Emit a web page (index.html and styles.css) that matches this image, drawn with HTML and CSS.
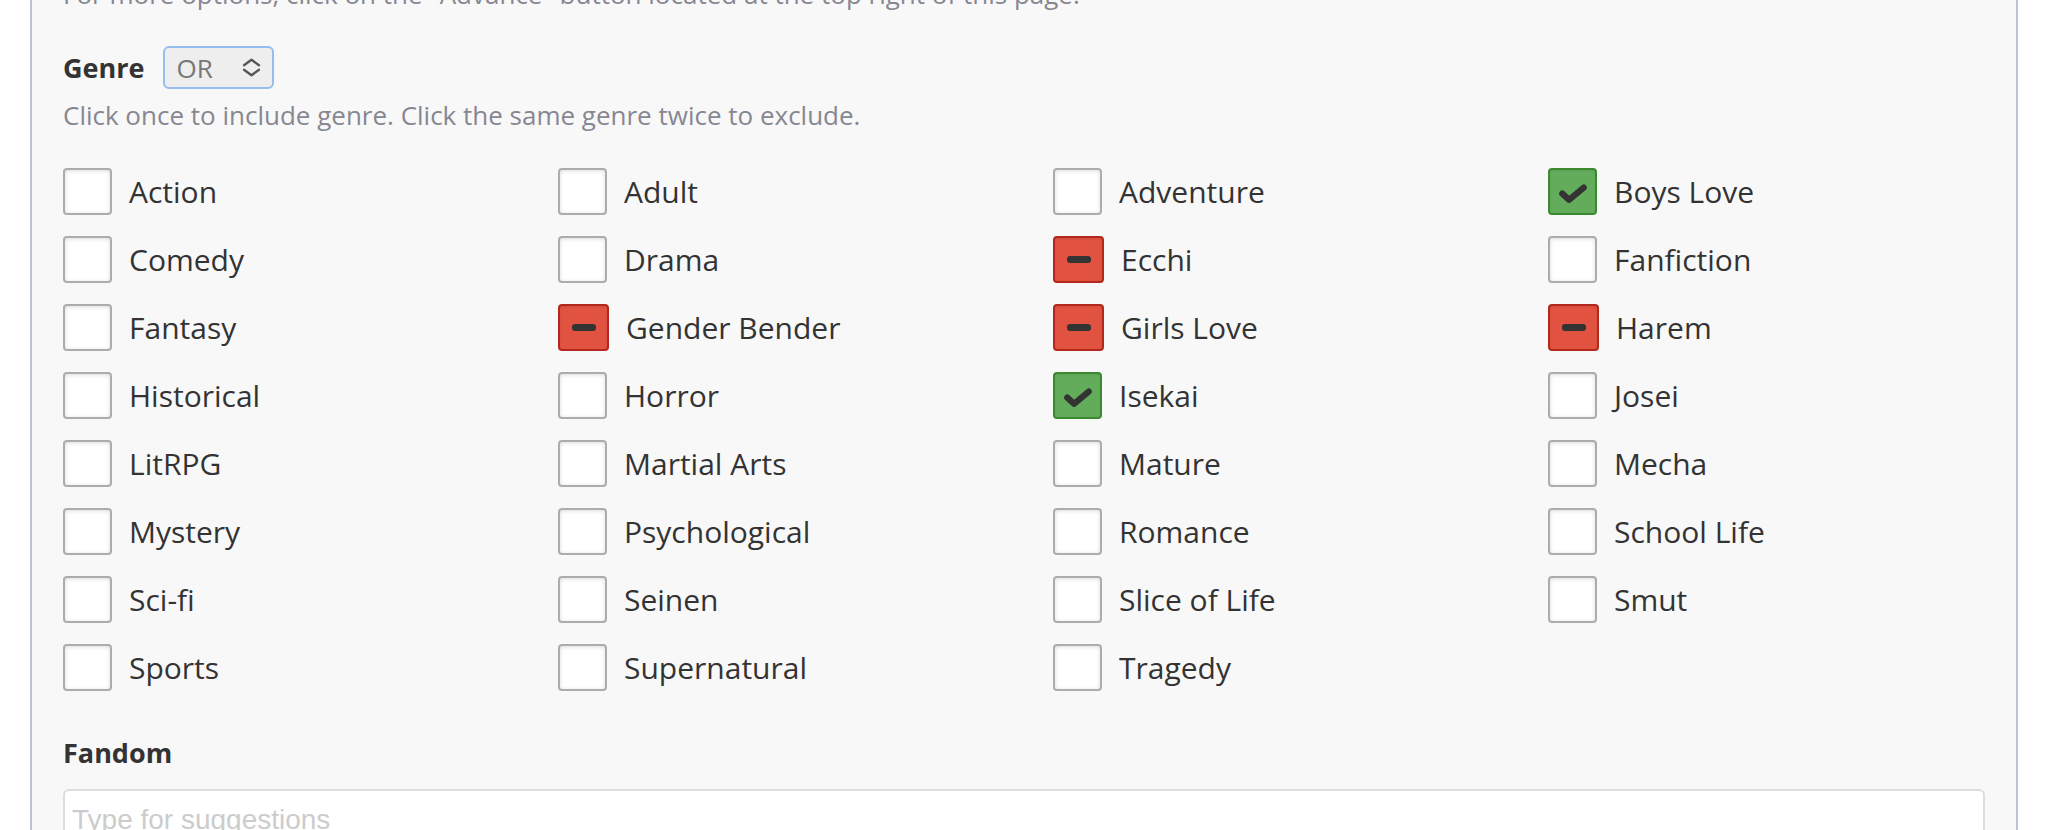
FILE: index.html
```html
<!DOCTYPE html>
<html lang="en">
<head>
<meta charset="utf-8">
<title>Genre filter</title>
<link rel="stylesheet" href="styles.css">
</head>
<body>
<div class="panel">
  <p class="hint hint-top">For more options, click on the "Advance" button located at the top right of this page.</p>
  <div class="genre-head">
    <span class="field-label">Genre</span>
    <div class="select">
      <span class="select-value">OR</span>
      <svg class="select-arrows" width="19" height="19" viewBox="0 0 19 19"><path d="M2 7.2 L9.5 1.8 L17 7.2 M2 11.8 L9.5 17.2 L17 11.8" fill="none" stroke="#555" stroke-width="2.3" stroke-linecap="round" stroke-linejoin="round"/></svg>
    </div>
  </div>
  <p class="hint hint-desc">Click once to include genre. Click the same genre twice to exclude.</p>
  <div class="genres">
    <label class="genre"><span class="box"></span><span class="name">Action</span></label>
    <label class="genre"><span class="box"></span><span class="name">Adult</span></label>
    <label class="genre"><span class="box"></span><span class="name">Adventure</span></label>
    <label class="genre"><span class="box included"><svg width="28" height="20" viewBox="0 0 28 20"><path d="M3.3 9.6 L10 15.8 L24.7 3.6" fill="none" stroke="#333" stroke-width="6.2" stroke-linecap="round" stroke-linejoin="round"/></svg></span><span class="name">Boys Love</span></label>

    <label class="genre"><span class="box"></span><span class="name">Comedy</span></label>
    <label class="genre"><span class="box"></span><span class="name">Drama</span></label>
    <label class="genre"><span class="box excluded"><span class="minus"></span></span><span class="name">Ecchi</span></label>
    <label class="genre"><span class="box"></span><span class="name">Fanfiction</span></label>

    <label class="genre"><span class="box"></span><span class="name">Fantasy</span></label>
    <label class="genre"><span class="box excluded"><span class="minus"></span></span><span class="name">Gender Bender</span></label>
    <label class="genre"><span class="box excluded"><span class="minus"></span></span><span class="name">Girls Love</span></label>
    <label class="genre"><span class="box excluded"><span class="minus"></span></span><span class="name">Harem</span></label>

    <label class="genre"><span class="box"></span><span class="name">Historical</span></label>
    <label class="genre"><span class="box"></span><span class="name">Horror</span></label>
    <label class="genre"><span class="box included"><svg width="28" height="20" viewBox="0 0 28 20"><path d="M3.3 9.6 L10 15.8 L24.7 3.6" fill="none" stroke="#333" stroke-width="6.2" stroke-linecap="round" stroke-linejoin="round"/></svg></span><span class="name">Isekai</span></label>
    <label class="genre"><span class="box"></span><span class="name">Josei</span></label>

    <label class="genre"><span class="box"></span><span class="name">LitRPG</span></label>
    <label class="genre"><span class="box"></span><span class="name">Martial Arts</span></label>
    <label class="genre"><span class="box"></span><span class="name">Mature</span></label>
    <label class="genre"><span class="box"></span><span class="name">Mecha</span></label>

    <label class="genre"><span class="box"></span><span class="name">Mystery</span></label>
    <label class="genre"><span class="box"></span><span class="name">Psychological</span></label>
    <label class="genre"><span class="box"></span><span class="name">Romance</span></label>
    <label class="genre"><span class="box"></span><span class="name">School Life</span></label>

    <label class="genre"><span class="box"></span><span class="name">Sci-fi</span></label>
    <label class="genre"><span class="box"></span><span class="name">Seinen</span></label>
    <label class="genre"><span class="box"></span><span class="name">Slice of Life</span></label>
    <label class="genre"><span class="box"></span><span class="name">Smut</span></label>

    <label class="genre"><span class="box"></span><span class="name">Sports</span></label>
    <label class="genre"><span class="box"></span><span class="name">Supernatural</span></label>
    <label class="genre"><span class="box"></span><span class="name">Tragedy</span></label>
  </div>
  <div class="field-label fandom">Fandom</div>
  <input class="text-input" type="text" placeholder="Type for suggestions">
</div>
</body>
</html>
```
FILE: styles.css
```css
html, body {
  margin: 0;
  padding: 0;
  background: #ffffff;
  overflow: hidden;
}

body {
  font-family: "Open Sans", "Noto Sans", sans-serif;
  color: #333333;
}

.panel {
  margin: 0 30px;
  min-height: 830px;
  background: #f8f8f8;
  border-left: 2px solid #bcc4d0;
  border-right: 2px solid #bcc4d0;
  padding: 0 31px;
  box-sizing: border-box;
}

.hint {
  margin: 0;
  font-size: 26px;
  line-height: 34px;
  color: #878792;
}

.hint-top {
  margin-top: -23px;
  white-space: nowrap;
}

.genre-head {
  display: flex;
  align-items: center;
  gap: 19px;
  height: 43px;
  margin-top: 35px;
}

.field-label {
  font-size: 27px;
  font-weight: 700;
  line-height: 36px;
  color: #333333;
}

.select {
  box-sizing: border-box;
  width: 111px;
  height: 43px;
  border: 2px solid #97bdf0;
  border-radius: 6px;
  background: #eeeeee;
  display: flex;
  align-items: center;
  justify-content: space-between;
  padding: 0 11px 0 11px;
}

.select-value {
  font-size: 26px;
  color: #777777;
  line-height: 1;
}

.hint-desc {
  margin-top: 9px;
}

.genres {
  display: grid;
  grid-template-columns: repeat(3, 495px) 1fr;
  row-gap: 21px;
  margin-top: 36px;
}

.genre {
  display: flex;
  align-items: center;
  gap: 17px;
  height: 47px;
}

.box {
  box-sizing: border-box;
  width: 49px;
  height: 47px;
  border: 2px solid #acacac;
  border-radius: 4px;
  background: #ffffff;
  box-shadow: inset 0 1px 4px rgba(0, 0, 0, 0.14);
  display: flex;
  align-items: center;
  justify-content: center;
  flex: none;
}

.box.included {
  background: #63ac5c;
  border-color: #3c8a2f;
  box-shadow: inset 0 1px 2px rgba(0, 0, 0, 0.08);
  padding-top: 4px;
}

.box.excluded {
  width: 51px;
  background: #e15241;
  border-color: #b2281c;
  box-shadow: inset 0 1px 2px rgba(0, 0, 0, 0.08);
}

.minus {
  display: block;
  width: 24px;
  height: 7px;
  border-radius: 3px;
  background: #333333;
}

.name {
  font-size: 30px;
  line-height: 41px;
  color: #333333;
  white-space: nowrap;
}

.fandom {
  margin-top: 44px;
}

.text-input {
  display: block;
  box-sizing: border-box;
  width: 100%;
  height: 62px;
  margin: 18px 0 0;
  padding: 0 7px;
  border: 2px solid #dddddd;
  border-radius: 6px;
  background: #ffffff;
  font-family: "Liberation Sans", Arial, sans-serif;
  font-size: 28px;
  color: #333333;
  outline: none;
}

.text-input::placeholder {
  color: #cccccc;
}
```
